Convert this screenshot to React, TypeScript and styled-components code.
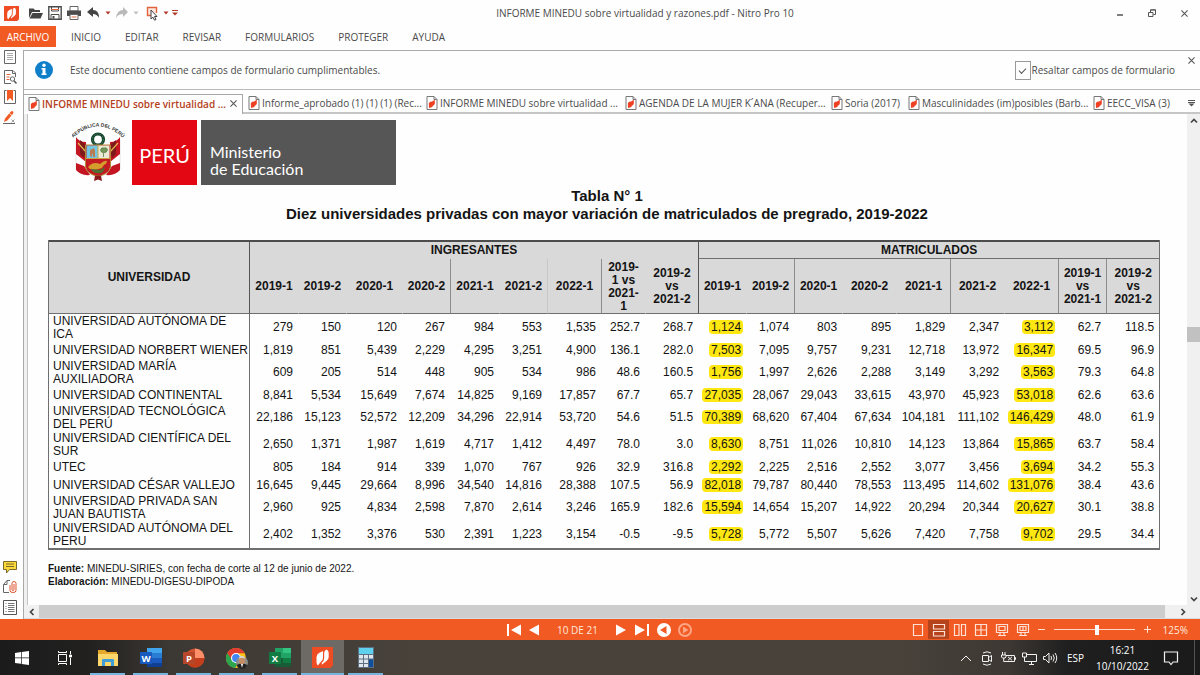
import React from "react";
import styled, { createGlobalStyle, css } from "styled-components";

const ui = '"Open Sans", "Noto Sans", sans-serif';
const print = '"Liberation Sans", Arial, sans-serif';
const seal = 'Lato, "Open Sans", sans-serif';
const orange = "#f15a22";
const ink = "#4a4a4a";

const GlobalStyle = createGlobalStyle`
  * { box-sizing: border-box; }
  body { margin: 0; background: #fff; }
  button { border: 0; padding: 0; background: none; font: inherit; color: inherit; display: flex; align-items: center; justify-content: center; }
  svg { display: block; flex: none; }
`;

const Window = styled.div`
  display: flex;
  flex-direction: column;
  height: 100vh;
  min-height: 540px;
  overflow: hidden;
  background: #fefefe;
  color: ${ink};
  font: 10px/14px ${ui};
`;

/* ---------- title bar ---------- */
const TitleBar = styled.header`
  display: grid;
  grid-template-columns: 1fr auto 1fr;
  align-items: center;
  height: 26px;
  flex: none;
  padding: 0 8px 0 4px;
`;
const QuickTools = styled.div`
  display: flex;
  align-items: center;
  gap: 3px;
`;
const WindowTitle = styled.h1`
  margin: 0;
  padding-left: 94px;
  font: inherit;
`;
const WindowButtons = styled.div`
  display: flex;
  justify-content: flex-end;
  gap: 16px;
`;
const WindowButton = styled.button`
  width: 16px;
  height: 16px;
`;

/* ---------- ribbon ---------- */
const Ribbon = styled.nav`
  display: flex;
  height: 21px;
  flex: none;
`;
const FileButton = styled.button`
  width: 56px;
  background: ${orange};
  color: #fff;
  margin-right: 15px;
`;
const RibbonTab = styled.button`
  margin-right: 24px;
`;

/* ---------- main area ---------- */
const Main = styled.main`
  display: flex;
  flex: 1;
  min-height: 0;
`;
const Sidebar = styled.aside`
  display: flex;
  flex-direction: column;
  justify-content: space-between;
  width: 23px;
  flex: none;
  padding: 0 3px 2px 0;
`;
const SideButton = styled.button`
  width: 20px;
  height: 20px;
`;
const Workspace = styled.section`
  display: flex;
  flex-direction: column;
  flex: 1;
  min-width: 0;
  margin-top: 3px;
  border-left: 1px solid #a9a9a9;
`;
const InfoBar = styled.div`
  display: flex;
  align-items: center;
  height: 40px;
  flex: none;
  padding: 0 4px 0 10px;
  border-top: 1px solid #ababab;
  border-bottom: 1px solid #b9b9b9;
`;
const InfoText = styled.p`
  flex: 1;
  margin: 0 0 0 16px;
`;
const CheckLabel = styled.label`
  display: flex;
  align-items: center;
`;
const CheckBox = styled.input`
  appearance: none;
  display: flex;
  align-items: center;
  justify-content: center;
  width: 16px;
  height: 19px;
  margin: 0 1px 0 0;
  border: 1px solid #9a9a9a;
  &:checked::after {
    content: "";
    width: 6px;
    height: 3px;
    border: solid #555;
    border-width: 0 0 1px 1px;
    transform: rotate(-45deg);
  }
`;
const CloseInfo = styled.button`
  align-self: flex-start;
  width: 10px;
  height: 18px;
  margin-left: 11px;
`;

const Tabs = styled.div`
  display: flex;
  align-items: stretch;
  height: 24px;
  flex: none;
  padding-top: 4px;
`;
const Tab = styled.div<{ $w: number; $active?: boolean }>`
  display: flex;
  align-items: center;
  gap: 2px;
  flex: 0 1 ${(p) => p.$w}px;
  min-width: 0;
  padding-left: 5px;
  border-bottom: 2px solid #c6c6c6;
  ${(p) =>
    p.$active &&
    css`
      padding: 0 0 2px 4px;
      border: solid #a9a9a9;
      border-width: 1px 1px 0 0;
      color: #b5401c;
      font-weight: 600;
    `}
`;
const TabName = styled.button`
  flex: 1;
  min-width: 0;
  justify-content: flex-start;
  white-space: nowrap;
`;
const TabClose = styled.button`
  width: 18px;
  height: 16px;
`;
const TabFiller = styled.div`
  display: flex;
  align-items: center;
  justify-content: flex-end;
  flex: 1;
  padding-right: 5px;
  border-bottom: 2px solid #c6c6c6;
`;

const Viewer = styled.div`
  display: grid;
  grid-template-columns: minmax(0, 1fr) 13px;
  grid-template-rows: minmax(0, 1fr) 13px;
  flex: 1;
  min-height: 0;
  background: #f0f0f0;
  border-bottom: 1px solid #dcdcdc;
`;
const Page = styled.article`
  overflow: hidden;
  margin-left: 3px;
  padding: 6px 27px 0 20px;
  border-left: 1px solid #c4c4c4;
  background: #fefefe;
  color: #141414;
  font: 12px/13px ${print};
`;
const VScroll = styled.div`
  display: flex;
  flex-direction: column;
  align-items: center;
`;
const HScroll = styled.div`
  display: flex;
  grid-column: 1 / -1;
`;
const ScrollArrow = styled.button<{ $w: number }>`
  width: ${(p) => p.$w}px;
  height: 13px;
  flex: none;
`;
const VTrack = styled.div`
  display: grid;
  grid-template-rows: 45fr 15px 56fr;
  flex: 1;
  width: 100%;
`;
const VThumb = styled.div`
  grid-row: 2;
  background: #c1c1c1;
`;
const HThumb = styled.div`
  flex: 1;
  background: #cdcdcd;
`;

/* ---------- document ---------- */
const Letterhead = styled.div`
  display: flex;
  align-items: flex-start;
  gap: 4px;
  padding-left: 24px;
  color: #fff;
`;
const Country = styled.div`
  display: flex;
  align-items: center;
  justify-content: center;
  width: 65px;
  height: 65px;
  padding-top: 4px;
  background: #e30613;
  font: 20px/24px ${seal};
`;
const Ministry = styled.div`
  width: 195px;
  height: 65px;
  padding: 23px 0 0 9px;
  background: #565656;
  font: 16px/17px ${seal};
`;
const Caption = styled.h2`
  margin: 2px 0 17px;
  padding-left: 6px;
  text-align: center;
  font: 700 15px/18px ${print};
`;

const line = "#6f6f6f";
const DataTable = styled.table`
  width: 100%;
  table-layout: fixed;
  border-collapse: separate;
  border-spacing: 0;
  border: solid ${line};
  border-width: 0 1px 2px 1px;
  td, th { padding: 0; }
`;
const GroupHead = styled.th<{ $lined?: boolean }>`
  height: 19px;
  background: #d9d9d9;
  border-top: 2px solid #4c4c4c;
  border-left: 1px solid #555;
  ${(p) => p.$lined && css`border-bottom: 1px solid ${line};`}
`;
const NameHead = styled(GroupHead)`
  border-left: 0;
  border-bottom: 1px solid ${line};
`;
const ColHead = styled.th<{ $edge?: string }>`
  height: 55px;
  background: #d9d9d9;
  border-bottom: 1px solid ${line};
  border-left: 1px solid ${(p) => p.$edge || "#d9d9d9"};
  line-height: 13px;
  white-space: pre;
  && { padding-top: 1px; }
`;
const NameCell = styled.th<{ $tall: boolean }>`
  height: ${(p) => (p.$tall ? 27 : 18)}px;
  text-align: left;
  font-weight: 400;
  white-space: pre;
  && { padding-left: 4px; }
`;
const Num = styled.td<{ $first?: boolean }>`
  text-align: right;
  && { padding-right: 5px; }
  ${(p) => p.$first && css`border-left: 1px solid ${line};`}
`;
const Mark = styled.mark`
  margin: 0 -2px;
  padding: 0 2px;
  border-radius: 4px;
  background: #ffe712;
  color: inherit;
`;
const Notes = styled.p`
  margin: 12px 0 0;
  font: 10px/13px ${print};
`;

/* ---------- status bar ---------- */
const StatusBar = styled.footer`
  display: grid;
  grid-template-columns: 1fr auto 1fr;
  align-items: center;
  height: 21px;
  flex: none;
  padding: 0 12px 0 0;
  background: ${orange};
  color: #ffe9df;
`;
const Pager = styled.div`
  display: flex;
  align-items: center;
  padding-left: 11px;
`;
const PagerButton = styled.button<{ $w?: number }>`
  width: ${(p) => p.$w || 20}px;
  height: 20px;
`;
const PageNumber = styled.span`
  width: 67px;
  text-align: center;
`;
const ViewTools = styled.div`
  display: flex;
  align-items: center;
  justify-content: flex-end;
`;
const ViewButton = styled.button<{ $on?: boolean }>`
  width: 21px;
  height: 19px;
  background: ${(p) => (p.$on ? "#b5431c" : "none")};
`;
const ZoomRange = styled.input`
  appearance: none;
  width: 81px;
  height: 12px;
  margin: 0 5px;
  background: linear-gradient(#ffd9c8, #ffd9c8) center / 100% 1px no-repeat;
  &::-webkit-slider-thumb {
    appearance: none;
    width: 4px;
    height: 10px;
    background: #fff;
  }
`;
const ZoomValue = styled.span`
  width: 34px;
  text-align: right;
`;

/* ---------- taskbar ---------- */
const Taskbar = styled.nav`
  display: flex;
  height: 35px;
  flex: none;
  background: linear-gradient(90deg, #1b1b1c 0, #222120 90px, #3c3833 170px, #48423b 420px, #48423b 75%, #3d3833 84%, #1f1f20 89%, #1a1a1b 100%);
  color: #fff;
`;
const SystemButton = styled.button`
  width: 43px;
`;
const AppButton = styled.button<{ $active?: boolean }>`
  width: 43px;
  background: linear-gradient(#76b5e0, #76b5e0) bottom / ${(p) => (p.$active ? "100%" : "35px")} 2px no-repeat
    ${(p) => (p.$active ? ", #6d6964" : "")};
`;
const Tray = styled.div`
  display: flex;
  align-items: center;
  margin-left: auto;
`;
const TrayButton = styled.button`
  width: 21px;
  height: 35px;
`;
const Language = styled.button`
  width: 31px;
`;
const Clock = styled.time`
  width: 63px;
  text-align: center;
  line-height: 16px;
`;
const Notify = styled.button`
  width: 34px;
  height: 35px;
`;
const ShowDesktop = styled.button`
  width: 6px;
  height: 35px;
  margin-left: 6px;
  border-left: 1px solid #55534f;
`;

/* ---------- icons ---------- */
const NitroMark = ({ size }: { size: number }) => (
  <svg width={size} height={size} viewBox="0 0 20 20">
    <path d="M0 0h20v17.500L17.500 20H0z" fill="#ee4c23" />
    <path d="M4.300 9.800Q4.300 7 6.700 5.800L10.500 3.700V10.200Q10.500 12.600 8.600 13.800L5.600 17.600Q4.300 16.500 4.300 14.500z" fill="#fff" />
    <path d="M11.600 5.300Q11.600 3.600 13.600 2.300Q15.900 2.900 15.900 5.500V9.800Q15.900 12 13.800 13.300L9.300 16.800V15Q11.600 13.200 11.600 10.600z" fill="#fff" />
  </svg>
);
const PdfIcon = () => (
  <svg width="12" height="14" viewBox="0 0 12 14">
    <path d="M1 .5h7l3 3v10H1z" fill="#fff" stroke="#777" />
    <path d="M8 .5v3h3" fill="none" stroke="#777" />
    <path d="M2.800 7.500Q3 6 5.300 5.200V6L8.800 3.800V7.800Q8.500 9 6.500 10V11L3 12z" fill="#ee4023" />
  </svg>
);
const Cross = ({ s = 7, c = "#555" }: { s?: number; c?: string }) => (
  <svg width={s} height={s} viewBox="0 0 8 8">
    <path d="M.5.5l7 7m0-7l-7 7" stroke={c} fill="none" strokeWidth="1.200" />
  </svg>
);
const Caret = ({ c }: { c: string }) => (
  <svg width="6" height="4" viewBox="0 0 6 4"><path d="M.5.500h5L3 3.500z" fill={c} /></svg>
);
const Chevron = ({ dir }: { dir: number }) => (
  <svg width="8" height="8" viewBox="0 0 8 8">
    <path d="M1 5.500l3-3 3 3" stroke="#444" strokeWidth="1.700" fill="none" transform={`rotate(${dir} 4 4)`} />
  </svg>
);

const Emblem = () => (
  <svg width="56" height="65" viewBox="0 0 56 65">
    <defs><path id="arc" d="M-2 21Q26-8 54 21" /></defs>
    <text fontFamily="Liberation Sans, sans-serif" fontSize="5" fontWeight="700" fill="#333">
      <textPath href="#arc" startOffset="50%" textAnchor="middle">REPÚBLICA DEL PERÚ</textPath>
    </text>
    <g transform="translate(-2 0)">
      <path d="M6 20l10 5-1 28-9-4z" fill="#fff" stroke="#bbb" strokeWidth=".4" />
      <path d="M50 20l-10 5 1 28 9-4z" fill="#fff" stroke="#bbb" strokeWidth=".4" />
      <path d="M6 17q3 5 10 5v20L6 34zM50 17q-3 5-10 5v20l10-8z" fill="#c31622" />
      <path d="M6 43l8 3 6 9q-9 1-14-5zM50 43l-8 3-6 9q9 1 14-5z" fill="#c31622" />
      <path d="M10 34V20l7 6-3 12zM46 34V20l-7 6 3 12z" fill="#7e1a1c" />
      <path d="M8 23l8 9M48 23l-8 9" stroke="#e2b64d" strokeWidth="1.200" />
      <circle cx="28" cy="19.500" r="5.500" fill="#fff" stroke="#17442f" strokeWidth="3.200" />
      <circle cx="28" cy="19.500" r="5.500" fill="none" stroke="#3d8454" strokeWidth="1" strokeDasharray="1.500 1.500" />
      <path d="M15.500 25h25v22q-2 8-12.500 9-10.500-1-12.500-9z" fill="#c41a22" stroke="#b08b34" />
      <path d="M16.500 25.500H28v13H16.500z" fill="#73c5e2" />
      <path d="M28 25.500h11.500v13H28z" fill="#e9ead3" />
      <path d="M20 36v-6l4-2 1 3v6h-2v-3h-1v3z" fill="#b77c52" />
      <path d="M33.500 37v-4m-3-3q1-3 3.500-2 3-1 3.500 2-1 3-3.500 2.500-3 .5-3.500-2.500z" fill="#72985b" stroke="#5d7c43" strokeWidth=".8" />
      <path d="M16 38.500h24M28 25v13" stroke="#c9a348" />
      <path d="M18 47q5-6 12-3 5-4 7-3l-1 3q-2 0-4 4-7 3-12 1z" fill="#d59b2d" />
      <path d="M21 49l9 1 5-3-2 5q-6 3-11-1z" fill="#4b7133" />
      <path d="M25 55.500h6l1 5.500-4-1.500-4 1.500z" fill="#8c1a1d" />
    </g>
  </svg>
);

const sideTop = [
  <svg key="p" width="12" height="14" viewBox="0 0 12 14"><path d="M.5.500h11v13H.5z" fill="#fff" stroke="#666" /><path d="M3 3.500h6M3 5.500h6M3 7.500h6M3 9.500h6" stroke="#aaa" /></svg>,
  <svg key="s" width="13" height="14" viewBox="0 0 13 14"><path d="M11.500 7V3L9 .5H.5v13H7" fill="#fff" stroke="#666" /><path d="M8.500.5V3.500h3" fill="none" stroke="#666" /><path d="M2.500 4.500h4M2.500 7h3M2.500 9.500h3" stroke="#e0633c" /><circle cx="8.500" cy="9" r="2.200" fill="none" stroke="#666" /><path d="M10 10.800l2.500 2.700" stroke="#555" strokeWidth="1.500" /></svg>,
  <svg key="b" width="12" height="14" viewBox="0 0 12 14"><path d="M2.500.5H.5v13h11V.5h-2" fill="#fff" stroke="#666" /><path d="M3 0h6v11L6 8l-3 3z" fill={orange} /></svg>,
  <svg key="e" width="14" height="14" viewBox="0 0 14 14"><path d="M1 12l1-3.500L7.500 2Q9 .5 10 1.500T9.800 4L4.300 10.500z" fill={orange} /><path d="M6.500 3.500L9 5.500" stroke="#fff" strokeWidth=".8" /><path d="M0 13.500h12" stroke="#666" /><path d="M8.500 9.500l3 3m0-3l-3 3" stroke="#888" strokeWidth=".8" /></svg>,
];
const sideBottom = [
  <svg key="c" width="14" height="13" viewBox="0 0 14 13"><path d="M.5.500h13v8H6.500L3.500 12V8.500h-3z" fill="#ffd83a" stroke="#7a6a2a" /><path d="M3 3h8M3 5.500h8" stroke="#7a6a2a" /></svg>,
  <svg key="a" width="14" height="14" viewBox="0 0 14 14"><path d="M6 12.500H.5v-8l3.500-4h3" fill="#fff" stroke="#666" /><path d="M.5 4.500H4v-4" fill="none" stroke="#666" /><path d="M7 5v5.500q0 2 3 2t3-2V3.500q0-2-2-2t-2 2V9.500q0 1 1 1t1-1V4" fill="none" stroke="#e0552f" /></svg>,
  <svg key="l" width="14" height="15" viewBox="0 0 14 15"><path d="M.5.500h13v14H.5z" fill="#fff" stroke="#555" /><path d="M2.500 3.500h1M2.500 6.500h1M2.500 8.500h1M2.500 11.500h1M5 3.500h6.500M5 5.500h6.500M5 7.500h6.500M5 9.500h6.500M5 11.500h6.500" stroke="#777" /></svg>,
];

/* ---------- data ---------- */
const ribbonTabs = ["INICIO", "EDITAR", "REVISAR", "FORMULARIOS", "PROTEGER", "AYUDA"];
const documents: [string, number][] = [
  ["Informe_aprobado (1) (1) (1) (Rec...", 178],
  ["INFORME MINEDU sobre virtualidad ...", 199],
  ["AGENDA DE LA MUJER K´ANA (Recuper...", 206],
  ["Soria (2017)", 77],
  ["Masculinidades (im)posibles (Barb...", 185],
  ["EECC_VISA (3)", 83],
];
const columnWidths = [200, 49, 48, 56, 48, 49, 48, 54, 44, 53, 48, 48, 48, 54, 54, 54, 54, 48, 53];
const heads: [string, string?][] = [
  ["2019-1", "#555"], ["2019-2"], ["2020-1"], ["2020-2"], ["2021-1", "#8c8c8c"], ["2021-2"], ["2022-1", "#c8c8c8"],
  ["2019-\n1 vs\n2021-\n1", "#8c8c8c"], ["2019-2\nvs\n2021-2"],
  ["2019-1", "#555"], ["2019-2"], ["2020-1", "#8c8c8c"], ["2020-2"], ["2021-1"], ["2021-2", "#8c8c8c"], ["2022-1"],
  ["2019-1\nvs\n2021-1", "#8c8c8c"], ["2019-2\nvs\n2021-2", "#8c8c8c"],
];
const rows: [string, string][] = [
  ["UNIVERSIDAD AUTÓNOMA DE\nICA", "279 150 120 267 984 553 1,535 252.7 268.7 1,124 1,074 803 895 1,829 2,347 3,112 62.7 118.5"],
  ["UNIVERSIDAD NORBERT WIENER", "1,819 851 5,439 2,229 4,295 3,251 4,900 136.1 282.0 7,503 7,095 9,757 9,231 12,718 13,972 16,347 69.5 96.9"],
  ["UNIVERSIDAD MARÍA\nAUXILIADORA", "609 205 514 448 905 534 986 48.6 160.5 1,756 1,997 2,626 2,288 3,149 3,292 3,563 79.3 64.8"],
  ["UNIVERSIDAD CONTINENTAL", "8,841 5,534 15,649 7,674 14,825 9,169 17,857 67.7 65.7 27,035 28,067 29,043 33,615 43,970 45,923 53,018 62.6 63.6"],
  ["UNIVERSIDAD TECNOLÓGICA\nDEL PERÚ", "22,186 15,123 52,572 12,209 34,296 22,914 53,720 54.6 51.5 70,389 68,620 67,404 67,634 104,181 111,102 146,429 48.0 61.9"],
  ["UNIVERSIDAD CIENTÍFICA DEL\nSUR", "2,650 1,371 1,987 1,619 4,717 1,412 4,497 78.0 3.0 8,630 8,751 11,026 10,810 14,123 13,864 15,865 63.7 58.4"],
  ["UTEC", "805 184 914 339 1,070 767 926 32.9 316.8 2,292 2,225 2,516 2,552 3,077 3,456 3,694 34.2 55.3"],
  ["UNIVERSIDAD CÉSAR VALLEJO", "16,645 9,445 29,664 8,996 34,540 14,816 28,388 107.5 56.9 82,018 79,787 80,440 78,553 113,495 114,602 131,076 38.4 43.6"],
  ["UNIVERSIDAD PRIVADA SAN\nJUAN BAUTISTA", "2,960 925 4,834 2,598 7,870 2,614 3,246 165.9 182.6 15,594 14,654 15,207 14,922 20,294 20,344 20,627 30.1 38.8"],
  ["UNIVERSIDAD AUTÓNOMA DEL\nPERU", "2,402 1,352 3,376 530 2,391 1,223 3,154 -0.5 -9.5 5,728 5,772 5,507 5,626 7,420 7,758 9,702 29.5 34.4"],
];
const marked = [9, 15];

const EnrolmentTable = () => (
  <DataTable>
    <colgroup>{columnWidths.map((w, i) => <col key={i} width={w} />)}</colgroup>
    <thead>
      <tr>
        <NameHead rowSpan={2}>UNIVERSIDAD</NameHead>
        <GroupHead colSpan={9}>INGRESANTES</GroupHead>
        <GroupHead colSpan={9} $lined>MATRICULADOS</GroupHead>
      </tr>
      <tr>{heads.map(([t, edge], i) => <ColHead key={i} $edge={edge}>{t}</ColHead>)}</tr>
    </thead>
    <tbody>
      {rows.map(([name, values]) => (
        <tr key={name}>
          <NameCell scope="row" $tall={name.includes("\n")}>{name}</NameCell>
          {values.split(" ").map((v, i) => (
            <Num key={i} $first={i === 0}>{marked.includes(i) ? <Mark>{v}</Mark> : v}</Num>
          ))}
        </tr>
      ))}
    </tbody>
  </DataTable>
);

const QuickAccess = () => (
  <QuickTools>
    <NitroMark size={15} />
    <button aria-label="Abrir"><svg width="21" height="14" viewBox="0 0 21 14"><path d="M7 12V2.500h4.500L13 4h5v2H10z" fill="#444" /><path d="M10.500 7H21l-2.500 5.500H7.500z" fill="#444" /></svg></button>
    <button aria-label="Guardar"><svg width="16" height="14" viewBox="0 0 16 14"><path d="M2.800.8h12.400v12.400H2.800z" fill="#fff" stroke="#4b4b4b" strokeWidth="1.400" /><path d="M5.500 1h7v4h-7z" fill="#fff" stroke="#4b4b4b" /><path d="M5 3.500h8" stroke="#e0633c" /><path d="M5 8.500h8V13H5z" fill="#fff" stroke="#4b4b4b" /><path d="M6.500 10h2v2.500h-2z" fill="#4b4b4b" /></svg></button>
    <button aria-label="Imprimir"><svg width="17" height="14" viewBox="0 0 17 14"><path d="M5 .5h8V5H5z" fill="#fff" stroke="#666" /><path d="M2 4.500h14V10H2z" fill="#4b4b4b" /><path d="M5 8.500h8v5H5z" fill="#fff" stroke="#666" /><path d="M6.500 11h5" stroke="#e0633c" /></svg></button>
    <button aria-label="Deshacer"><svg width="17" height="14" viewBox="0 0 17 14"><path d="M8 1v3q6 0 6 8-2-4-6-4v3L2 6z" fill="#444" /></svg></button>
    <Caret c="#b0392a" />
    <button aria-label="Rehacer"><svg width="16" height="14" viewBox="0 0 16 14"><path d="M9 1v3q-6 0-7 8 2-4 7-4v3l5-5z" fill="#b9b9b9" /></svg></button>
    <Caret c="#bdbdbd" />
    <button aria-label="Seleccionar"><svg width="18" height="15" viewBox="0 0 18 15"><path d="M9 9.500H5.500v-8h9V7" fill="#fde8e0" stroke="#e0633c" strokeWidth="1.400" /><path d="M9 4l6 6.500h-2.500l1.500 3-1.500.7-1.500-3L9 13z" fill="#fff" stroke="#444" /></svg></button>
    <Caret c="#b0392a" />
    <button aria-label="Personalizar"><svg width="6" height="6" viewBox="0 0 6 6"><path d="M0 .500h6" stroke="#b0392a" /><path d="M0 2.500h6L3 5.500z" fill="#b0392a" /></svg></button>
  </QuickTools>
);

const pageViews = [
  <path key="0" d="M2.500 1.500h9v11h-9z" />,
  <path key="1" d="M1.500 1.500h11v4.500h-11zM1.500 8.500h11v4.500h-11z" />,
  <path key="2" d="M1.500 1.500h4.500v11H1.500zM8.500 1.500h4v11h-4z" />,
  <path key="3" d="M1.500 1.500h11v11h-11zM7 1.500v11M1.500 7h11" />,
  <path key="4" d="M1.500 1.500h11v8h-11zM4 3.500h6v4H4zM3 12.500h8M5 10v2m4-2v2" />,
  <path key="5" d="M1.500 1.500h11v8h-11zM4 3.500h6v4H4zM7 3.500v4M3 12.500h8M5 10v2m4-2v2" />,
];

const apps: { name: string; active?: boolean; icon: React.ReactNode }[] = [
  { name: "Explorador", icon: <svg width="20" height="18" viewBox="0 0 20 18"><path d="M0 1h7l2 2h10v13H0z" fill="#e7a92b" /><path d="M0 5h20v12H0z" fill="#fbd76c" /><path d="M4 17v-6q0-1 1-1h10q1 0 1 1v6h-3v-4H7v4z" fill="#3f9ed8" /></svg> },
  { name: "Word", icon: <svg width="22" height="20" viewBox="0 0 22 20"><path d="M7 0h15v5H7z" fill="#41a5ee" /><path d="M7 5h15v5H7z" fill="#2b7cd3" /><path d="M7 10h15v5H7z" fill="#185abd" /><path d="M7 15h15v4H7z" fill="#103f91" /><rect y="4" width="12" height="12" rx="1" fill="#185abd" /><text x="6" y="13.500" fontSize="9.500" fontWeight="700" fontFamily="Open Sans, sans-serif" textAnchor="middle" fill="#fff">W</text></svg> },
  { name: "PowerPoint", icon: <svg width="22" height="20" viewBox="0 0 22 20"><circle cx="12" cy="10" r="9.500" fill="#d35230" /><path d="M12 .5A9.500 9.500 0 0 1 21.500 10H12z" fill="#ff8f6b" /><path d="M12 10h9.500a9.500 9.500 0 0 1-19 0z" fill="#c43e1c" /><rect y="4" width="12" height="12" rx="1" fill="#b7472a" /><text x="6" y="13.500" fontSize="9.500" fontWeight="700" fontFamily="Open Sans, sans-serif" textAnchor="middle" fill="#fff">P</text></svg> },
  { name: "Chrome", icon: <svg width="24" height="22" viewBox="0 0 24 22"><circle cx="11" cy="11" r="10" fill="#fbc116" /><path d="M2.300 6A10 10 0 0 0 10 21l4-6.500-3-3.500z" fill="#2da44e" /><path d="M2.300 6A10 10 0 0 1 19.700 6.200H11L7 13z" fill="#e33b2e" /><circle cx="11" cy="11" r="5" fill="#fff" /><circle cx="11" cy="11" r="3.900" fill="#4285f4" /><circle cx="17" cy="15.500" r="6" fill="#8f8d88" /><path d="M11.500 18q2.500-1.500 5.500-1.500t5.500 1.500q-2 4-5.500 4t-5.500-4z" fill="#222" /><ellipse cx="17" cy="13.500" rx="3" ry="3.500" fill="#c98d63" /><path d="M13.800 12.500q0-3.500 3.200-3.500t3.200 3.500l-1-1.500h-4.400z" fill="#d8d6d2" /><path d="M16 17l1 4 1-4z" fill="#fff" /></svg> },
  { name: "Excel", icon: <svg width="22" height="20" viewBox="0 0 22 20"><path d="M6 0h8v10H6z" fill="#21a366" /><path d="M14 0h8v5h-8z" fill="#33c481" /><path d="M14 5h8v5h-8z" fill="#21a366" /><path d="M6 10h8v9H6z" fill="#185c37" /><path d="M14 10h8v5h-8z" fill="#107c41" /><path d="M14 15h8v4h-8z" fill="#185c37" /><rect y="4" width="12" height="12" rx="1" fill="#107c41" /><text x="6" y="13.500" fontSize="9.500" fontWeight="700" fontFamily="Open Sans, sans-serif" textAnchor="middle" fill="#fff">X</text></svg> },
  { name: "Nitro Pro", active: true, icon: <NitroMark size={21} /> },
  { name: "Calculadora", icon: <svg width="16" height="21" viewBox="0 0 16 21"><path d="M0 0h16v21H0z" fill="#5d6f80" /><path d="M1 1h14v6H1z" fill="#5fd0ee" /><path d="M1 8h4v3.500H1zM6 8h4v3.500H6zM1 12.500h4V16H1zM6 12.500h4V16H6zM1 17h4v3H1zM6 17h4v3H6z" fill="#dfe6ec" /><path d="M11 8h4v3.500h-4z" fill="#dfe6ec" /><path d="M11 12.500h4V20h-4z" fill="#0f4f9e" /></svg> },
];

const trayIcons: [string, React.ReactNode][] = [
  ["Mostrar iconos ocultos", <path key="a" d="M3 11l5-5 5 5" />],
  ["Reunirse ahora", <path key="b" d="M3.500 5.500h6v6h-6zM9.500 7.500l3-2v6l-3-2M4 3q4-2.500 8 0M4 14q4 2.500 8 0" />],
  ["Batería", <path key="c" d="M6 5.500h8.500v6H5M14.500 7.500h1v2h-1M2.500 2v3M5 2v3M1.500 5h4.500v2L5 8H2.500L1.500 7zM3.700 8v3.500H5M8 6.800l4 3.500m0-3.500l-4 3.500" />],
  ["Red", <path key="d" d="M6 4.500h9.500v7h-10M8 14.500h5M10.500 11.500v3M1.500 3h4v4h-4zM3.500 7v4.500H6" />],
  ["Volumen", <path key="e" d="M1.500 6.500h2L7 3v10L3.500 9.500h-2zM9 6q1 2 0 4M11 4.500q2.500 3.500 0 7M13 3q3.500 5 0 10" />],
];

export default function App() {
  return (
    <Window>
      <GlobalStyle />
      <TitleBar>
        <QuickAccess />
        <WindowTitle>INFORME MINEDU sobre virtualidad y razones.pdf - Nitro Pro 10</WindowTitle>
        <WindowButtons>
          <WindowButton aria-label="Minimizar"><svg width="6" height="6"><path d="M0 5h6" stroke="#555" strokeWidth="1.500" /></svg></WindowButton>
          <WindowButton aria-label="Restaurar"><svg width="8" height="8" viewBox="0 0 8 8"><path d="M.5 3.500h4.500v4H.5zM2.500 3V.800h5v4.700H5.500" fill="none" stroke="#555" /><path d="M2.500 1h5" stroke="#555" /></svg></WindowButton>
          <WindowButton aria-label="Cerrar"><Cross /></WindowButton>
        </WindowButtons>
      </TitleBar>

      <Ribbon>
        <FileButton>ARCHIVO</FileButton>
        {ribbonTabs.map((t) => <RibbonTab key={t}>{t}</RibbonTab>)}
      </Ribbon>

      <Main>
        <Sidebar>
          <div>{sideTop.map((icon, i) => <SideButton key={i} aria-label={`Panel ${i + 1}`}>{icon}</SideButton>)}</div>
          <div>{sideBottom.map((icon, i) => <SideButton key={i} aria-label={`Panel ${i + 5}`}>{icon}</SideButton>)}</div>
        </Sidebar>

        <Workspace>
          <InfoBar>
            <svg width="20" height="20" viewBox="0 0 20 20"><circle cx="10" cy="10" r="9" fill="#0f7fc9" /><circle cx="10" cy="5.300" r="1.700" fill="#fff" /><path d="M7.500 8h4v5.500h1V15h-5v-1.500h1v-4h-1z" fill="#fff" /></svg>
            <InfoText>Este documento contiene campos de formulario cumplimentables.</InfoText>
            <CheckLabel><CheckBox type="checkbox" defaultChecked />Resaltar campos de formulario</CheckLabel>
            <CloseInfo aria-label="Cerrar aviso"><Cross /></CloseInfo>
          </InfoBar>

          <Tabs>
            <Tab $w={219} $active>
              <PdfIcon />
              <TabName>INFORME MINEDU sobre virtualidad ...</TabName>
              <TabClose aria-label="Cerrar pestaña"><Cross /></TabClose>
            </Tab>
            {documents.map(([name, w]) => (
              <Tab key={name} $w={w}><PdfIcon /><TabName>{name}</TabName></Tab>
            ))}
            <TabFiller><button aria-label="Más pestañas"><svg width="7" height="7" viewBox="0 0 7 7"><path d="M0 .500h7M0 2.500h7" stroke="#555" /><path d="M.5 3.500h6L3.500 6.500z" fill="#555" /></svg></button></TabFiller>
          </Tabs>

          <Viewer>
            <Page>
              <Letterhead>
                <Emblem />
                <Country>PERÚ</Country>
                <Ministry>Ministerio<br />de Educación</Ministry>
              </Letterhead>
              <Caption>Tabla N° 1<br />Diez universidades privadas con mayor variación de matriculados de pregrado, 2019-2022</Caption>
              <EnrolmentTable />
              <Notes>
                <b>Fuente:</b> MINEDU-SIRIES, con fecha de corte al 12 de junio de 2022.<br />
                <b>Elaboración:</b> MINEDU-DIGESU-DIPODA
              </Notes>
            </Page>
            <VScroll>
              <ScrollArrow $w={13} aria-label="Subir"><Chevron dir={0} /></ScrollArrow>
              <VTrack><VThumb /></VTrack>
              <ScrollArrow $w={13} aria-label="Bajar"><Chevron dir={180} /></ScrollArrow>
            </VScroll>
            <HScroll>
              <ScrollArrow $w={15} aria-label="Izquierda"><Chevron dir={-90} /></ScrollArrow>
              <HThumb />
              <ScrollArrow $w={35} aria-label="Derecha"><Chevron dir={90} /></ScrollArrow>
            </HScroll>
          </Viewer>
        </Workspace>
      </Main>

      <StatusBar>
        <span />
        <Pager>
          <PagerButton aria-label="Primera página"><svg width="14" height="12" viewBox="0 0 14 12"><path d="M0 0h2v12H0zM14 .500v11L4 6z" fill="#fff" /></svg></PagerButton>
          <PagerButton aria-label="Página anterior"><svg width="10" height="12" viewBox="0 0 10 12"><path d="M10 .500v11L0 6z" fill="#fff" /></svg></PagerButton>
          <PageNumber>10 DE 21</PageNumber>
          <PagerButton aria-label="Página siguiente"><svg width="10" height="12" viewBox="0 0 10 12"><path d="M0 .500v11L10 6z" fill="#fff" /></svg></PagerButton>
          <PagerButton $w={22} aria-label="Última página"><svg width="14" height="12" viewBox="0 0 14 12"><path d="M12 0h2v12h-2zM0 .500v11L10 6z" fill="#fff" /></svg></PagerButton>
          <PagerButton $w={21} aria-label="Vista anterior"><svg width="14" height="14" viewBox="0 0 14 14"><circle cx="7" cy="7" r="7" fill="#fff" /><path d="M9.500 3v8L3 7z" fill={orange} /></svg></PagerButton>
          <PagerButton $w={21} aria-label="Vista siguiente"><svg width="14" height="14" viewBox="0 0 14 14"><circle cx="7" cy="7" r="6" fill="none" stroke="#ffa585" strokeWidth="2" /><path d="M5 3.500v7L10.500 7z" fill="#ffa585" /></svg></PagerButton>
        </Pager>
        <ViewTools>
          {pageViews.map((shape, i) => (
            <ViewButton key={i} $on={i === 1} aria-label={`Vista ${i + 1}`}>
              <svg width="14" height="14" viewBox="0 0 14 14" fill="none" stroke="#ffe0d2" strokeWidth="1.200">{shape}</svg>
            </ViewButton>
          ))}
          <PagerButton $w={16} aria-label="Alejar"><svg width="7" height="7"><path d="M0 3.500h7" stroke="#ffe0d2" /></svg></PagerButton>
          <ZoomRange type="range" min={0} max={100} defaultValue={53} aria-label="Zoom" />
          <PagerButton $w={14} aria-label="Acercar"><svg width="7" height="7"><path d="M0 3.500h7M3.500 0v7" stroke="#ffe0d2" /></svg></PagerButton>
          <ZoomValue>125%</ZoomValue>
        </ViewTools>
      </StatusBar>

      <Taskbar>
        <SystemButton aria-label="Inicio"><svg width="14" height="14" viewBox="0 0 14 14"><path d="M0 2l6-.9v5.500H0zM6.700 1L14 0v6.600H6.700zM0 7.300h6v5.500L0 12zM6.700 7.300H14V14l-7.300-1z" fill="#fff" /></svg></SystemButton>
        <SystemButton aria-label="Vista de tareas"><svg width="16" height="14" viewBox="0 0 16 14" fill="none" stroke="#fff"><path d="M1.500 3.500h8v7h-8zM1.500 0v1.500h8V0M1.500 14v-1.500h8V14M13.500 0v3M13.500 7v7" /><path d="M12.500 4h2v2h-2z" fill="#fff" /></svg></SystemButton>
        {apps.map((a) => <AppButton key={a.name} $active={a.active} aria-label={a.name}>{a.icon}</AppButton>)}
        <Tray>
          {trayIcons.map(([name, shape]) => (
            <TrayButton key={name} aria-label={name}><svg width="16" height="16" viewBox="0 0 16 16" fill="none" stroke="#f2f2f2">{shape}</svg></TrayButton>
          ))}
          <Language>ESP</Language>
          <Clock>16:21<br />10/10/2022</Clock>
          <Notify aria-label="Notificaciones"><svg width="16" height="16" viewBox="0 0 16 16" fill="none" stroke="#f2f2f2" strokeWidth="1.200"><path d="M1.500 2h13v10H10l-2 2.500L6 12H1.500z" /></svg></Notify>
          <ShowDesktop aria-label="Mostrar escritorio" />
        </Tray>
      </Taskbar>
    </Window>
  );
}
